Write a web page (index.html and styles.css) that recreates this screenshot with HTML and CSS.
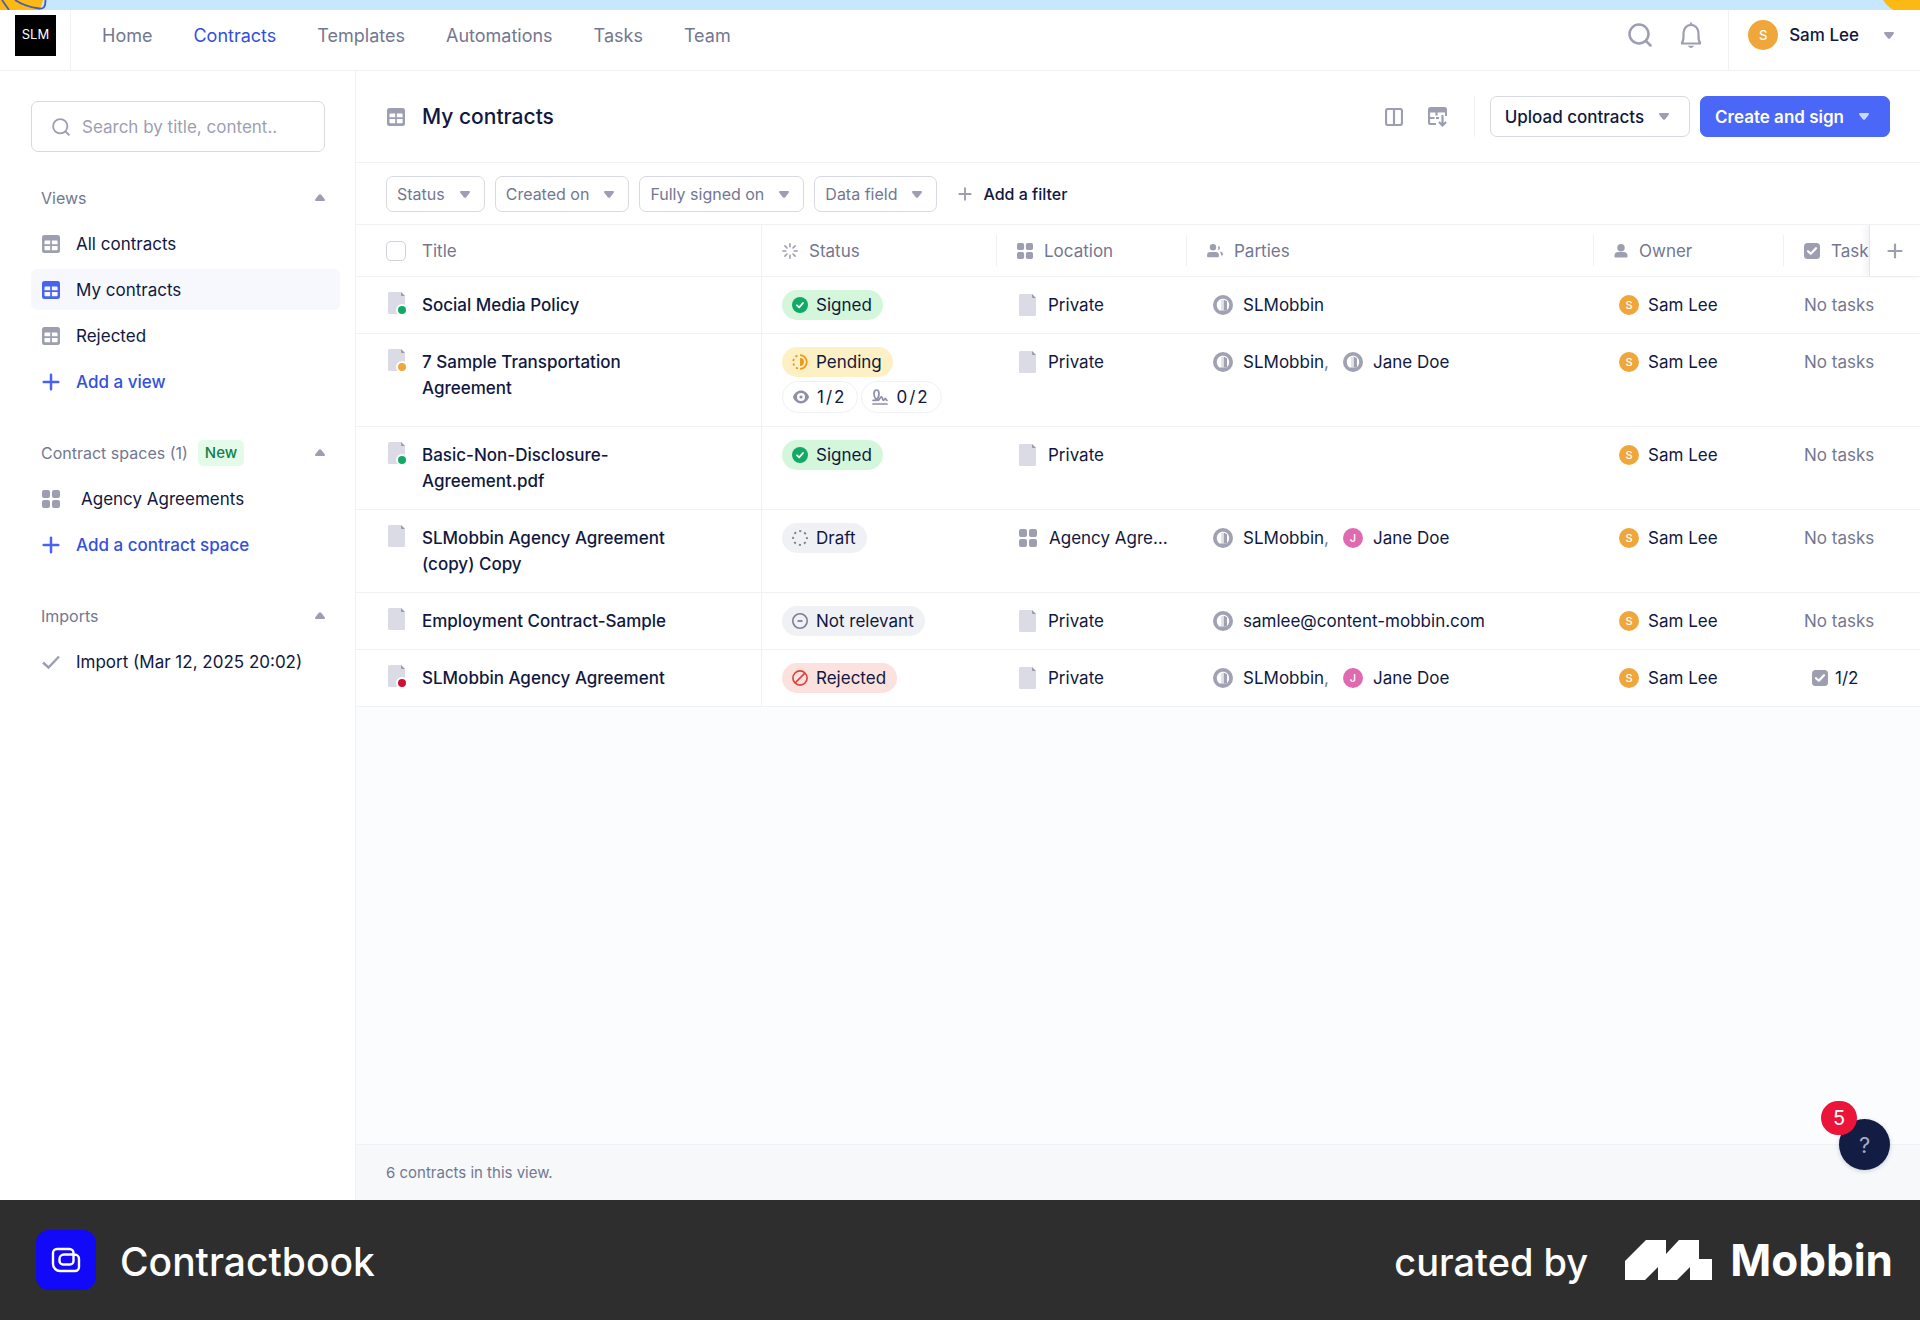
FILE: index.html
```html
<!DOCTYPE html>
<html lang="en">
<head>
    <meta charset="UTF-8">
    <meta name="viewport" content="width=device-width, initial-scale=1.0">
    <title>My contracts - Contractbook</title>
    <link rel="stylesheet" href="styles.css">
</head>
<body>

    <!-- Shared icons -->
    <svg class="sprite" aria-hidden="true">
        <symbol id="i-caret" viewBox="0 0 10 7"><path d="M1.2 0h7.600c1 0 1.500 1 .9 1.800L6 6.400c-.5.6-1.500.6-2 0L.3 1.800C-.3 1 .2 0 1.200 0z" fill="currentColor"/></symbol>
        <symbol id="i-up" viewBox="0 0 10 7"><path d="M1.200 7h7.600c1 0 1.500-1 .9-1.800L6.200.8c-.6-.8-1.800-.8-2.400 0L.3 5.200C-.3 6 .2 7 1.200 7z" fill="currentColor"/></symbol>
        <symbol id="i-table" viewBox="0 0 18 18"><path fill-rule="evenodd" d="M2.500 0h13A2.500 2.500 0 0 1 18 2.500v13a2.500 2.500 0 0 1-2.500 2.500h-13A2.500 2.500 0 0 1 0 15.500v-13A2.500 2.500 0 0 1 2.500 0zM3.500 5.500a1 1 0 0 0-1 1v2.700h5.700V5.500zM9.900 5.500v3.700h5.700V6.500a1 1 0 0 0-1-1zM2.500 11v3.200a1 1 0 0 0 1 1h4.700V11zM9.900 11v4.200h4.700a1 1 0 0 0 1-1V11z" fill="currentColor"/></symbol>
        <symbol id="i-grid" viewBox="0 0 18 18"><g fill="currentColor"><rect width="8" height="8" rx="2"/><rect x="10" width="8" height="8" rx="2"/><rect y="10" width="8" height="8" rx="2"/><rect x="10" y="10" width="8" height="8" rx="2"/></g></symbol>
        <symbol id="i-plus" viewBox="0 0 16 16"><path d="M8 1.500v13M1.500 8h13" stroke="currentColor" stroke-width="2.200" stroke-linecap="round"/></symbol>
        <symbol id="i-search" viewBox="0 0 24 24"><g fill="none" stroke="currentColor" stroke-width="2.500" stroke-linecap="round"><circle cx="11" cy="11" r="9.500"/><path d="M18 18l4.500 4.500"/></g></symbol>
        <symbol id="i-doc" viewBox="0 0 17 22"><path d="M1.500 0H13l4 4v16.500a1.500 1.500 0 0 1-1.500 1.500h-14A1.500 1.500 0 0 1 0 20.500v-19A1.500 1.500 0 0 1 1.500 0z" fill="#dadbe4"/><path d="M13 0l4 4h-3.200a.8.8 0 0 1-.8-.8z" fill="#9a9cae"/></symbol>
        <symbol id="i-org" viewBox="0 0 20 20"><circle cx="10" cy="10" r="10" fill="#a0a2b3"/><path d="M10 3.800c3.500 0 6.200 2.700 6.200 6.200 0 2.600-1.200 4.500-2.700 5.500H6.500C5 14.500 3.800 12.600 3.800 10c0-3.500 2.700-6.200 6.200-6.200z" fill="#fff"/><path d="M10.600 4.500l3.400 1.800v9.200h-3.400z" fill="#a0a2b3"/><path d="M9 5v10.500" stroke="#a0a2b3" stroke-width=".6"/></symbol>
        <symbol id="i-check" viewBox="0 0 16 16"><rect width="16" height="16" rx="3.500" fill="#9d9fb1"/><path d="M4 8.200l2.800 2.600L12 5.200" fill="none" stroke="#fff" stroke-width="2.200" stroke-linecap="round" stroke-linejoin="round"/></symbol>
        <symbol id="i-signed" viewBox="0 0 16 16"><circle cx="8" cy="8" r="8" fill="#12a966"/><path d="M5 8.300l2.200 2L11 6" fill="none" stroke="#fff" stroke-width="1.800" stroke-linecap="round" stroke-linejoin="round"/></symbol>
        <symbol id="i-pending" viewBox="0 0 16 16"><path d="M8 1.200a6.800 6.800 0 0 1 0 13.600" fill="none" stroke="#ee9a1d" stroke-width="1.800"/><path d="M8 4a4 4 0 0 1 0 8z" fill="#ee9a1d"/><path d="M8 14.800A6.800 6.800 0 0 1 8 1.200" fill="none" stroke="#ee9a1d" stroke-width="1.800" stroke-dasharray="2.200 2.600" stroke-dashoffset="-2"/></symbol>
        <symbol id="i-draft" viewBox="0 0 16 16"><circle cx="8" cy="8" r="6.900" fill="none" stroke="#7c7f95" stroke-width="1.900" stroke-dasharray="2.200 3.220" stroke-dashoffset="1.100"/></symbol>
        <symbol id="i-minus" viewBox="0 0 16 16"><circle cx="8" cy="8" r="7.200" fill="none" stroke="#7c7f95" stroke-width="1.600"/><path d="M5.500 8h5" stroke="#7c7f95" stroke-width="1.800"/></symbol>
        <symbol id="i-reject" viewBox="0 0 16 16"><g fill="none" stroke="#d8463f" stroke-width="1.700"><circle cx="8" cy="8" r="7.100"/><path d="M3.200 12.800l9.600-9.600"/></g></symbol>
        <symbol id="i-eye" viewBox="0 0 16 16"><path fill-rule="evenodd" d="M8 1.500c3.600 0 6.300 2.500 7.800 5.700.2.500.2 1.100 0 1.600C14.300 12 11.600 14.500 8 14.500S1.700 12 .2 8.800a2 2 0 0 1 0-1.600C1.700 4 4.400 1.500 8 1.500zM8 4a4 4 0 1 0 0 8 4 4 0 0 0 0-8z" fill="#8e90a6"/><circle cx="8" cy="8" r="1.600" fill="#8e90a6"/></symbol>
        <symbol id="i-sign" viewBox="0 0 16 16"><g fill="none" stroke="#8e90a6" stroke-width="1.700" stroke-linecap="round"><path d="M1 15h14"/><path d="M1 11.300h3c2-1.500 3-4.300 3-6.800C7 2.300 6.200 1 4.500 1S2 2.300 2 4.500c0 2.800 1.500 6.800 4 6.800 1.500 0 2-3.500 3.500-3.500 1.200 0 .5 3.500 2 3.500 1 0 .8-2 1.800-2 .8 0 .5 2 1.700 2"/></g></symbol>
        <symbol id="i-user" viewBox="0 0 14 15"><g fill="currentColor"><circle cx="7" cy="4" r="4"/><path d="M0 12.500C0 10 1.500 8.500 4 8.500h6c2.500 0 4 1.500 4 4 0 1.500-.5 2-1.500 2h-11C.5 14.500 0 14 0 12.500z"/></g></symbol>
        <symbol id="i-users" viewBox="0 0 16 14"><g fill="currentColor"><circle cx="6" cy="3.200" r="3.200"/><path d="M0 11.500C0 9 1.200 8 3.500 8h5c2.300 0 3.500 1 3.500 3.500 0 1.300-.5 1.800-1.500 1.800h-9C.5 13.300 0 12.800 0 11.500z"/><path d="M11 2a2 2 0 0 1 0 4 5 5 0 0 0 0-4zM12.500 7.500c2.200 0 3.500 1 3.500 3 0 .8-.6 1-2 1 0-1.800-.4-3-1.500-4z"/></g></symbol>
        <symbol id="i-spin" viewBox="0 0 16 16"><path d="M8 .8v3M8 12.200v3M.8 8h3M12.200 8h3M2.900 2.900l2.100 2.100M11 11l2.100 2.100M2.900 13.100L5 11M11 5l2.100-2.100" stroke="currentColor" stroke-width="1.600" stroke-linecap="round"/></symbol>
    </svg>

    <!-- Bottom edge of the banner -->
    <div class="banner">
        <svg class="banner-left" viewBox="0 0 50 10"><path d="M0 0h43l-3 10H0z" fill="#fdb913"/><path d="M2 0l7 10M15 0c6 4 14 7 24 8.500 5 .7 6.500-2 6.500-8.500" fill="none" stroke="#4d5bb5" stroke-width="1.800"/></svg>
        <svg class="banner-right" viewBox="0 0 37 10"><path d="M0 0h37v10H11C6 8 3 4 0 0z" fill="#fdb913"/></svg>
    </div>

    <header class="topbar">
        <a class="workspace" href="#" aria-label="SLM workspace"><span class="workspace-logo">SLM</span></a>
        <nav class="main-nav">
            <a href="#">Home</a>
            <a href="#" class="active">Contracts</a>
            <a href="#">Templates</a>
            <a href="#">Automations</a>
            <a href="#">Tasks</a>
            <a href="#">Team</a>
        </nav>
        <div class="topbar-icons">
            <button class="icon-button" aria-label="Search"><svg class="icon-24"><use href="#i-search"/></svg></button>
            <button class="icon-button" aria-label="Notifications">
                <svg class="icon-26" viewBox="0 0 26 26" fill="none" stroke="currentColor" stroke-width="2.200"><path d="M13 2.500V.5M3 21.500h20M3.500 21.500c1.800-2 2-4 2-7v-3.500a7.500 8.200 0 0 1 15 0v3.500c0 3 .2 5 2 7" stroke-linejoin="round"/><path d="M10 23.800h6c-.6 1.300-1.700 2.200-3 2.200s-2.400-.9-3-2.200z" fill="currentColor" stroke="none"/></svg>
            </button>
        </div>
        <button class="account">
            <span class="avatar avatar-large">S</span>
            <span class="account-name">Sam Lee</span>
            <svg class="caret"><use href="#i-caret"/></svg>
        </button>
    </header>

    <div class="app">
        <aside class="sidebar">
            <label class="search">
                <svg class="icon-18"><use href="#i-search"/></svg>
                <input type="text" placeholder="Search by title, content.." aria-label="Search contracts">
            </label>

            <section class="side-group">
                <button class="side-heading">Views <svg class="caret"><use href="#i-up"/></svg></button>
                <a class="side-item" href="#"><svg class="icon-18"><use href="#i-table"/></svg>All contracts</a>
                <a class="side-item selected" href="#"><svg class="icon-18"><use href="#i-table"/></svg>My contracts</a>
                <a class="side-item" href="#"><svg class="icon-18"><use href="#i-table"/></svg>Rejected</a>
                <a class="side-item add" href="#"><svg class="icon-18"><use href="#i-plus"/></svg>Add a view</a>
            </section>

            <section class="side-group">
                <button class="side-heading">Contract spaces (1) <span class="new-tag">New</span> <svg class="caret"><use href="#i-up"/></svg></button>
                <a class="side-item space" href="#"><svg class="icon-18"><use href="#i-grid"/></svg>Agency Agreements</a>
                <a class="side-item add" href="#"><svg class="icon-18"><use href="#i-plus"/></svg>Add a contract space</a>
            </section>

            <section class="side-group">
                <button class="side-heading">Imports <svg class="caret"><use href="#i-up"/></svg></button>
                <a class="side-item" href="#"><svg class="icon-18" viewBox="0 0 18 18"><path d="M1 9.500L6.500 14.500 17 3.500" fill="none" stroke="currentColor" stroke-width="2.400"/></svg>Import (Mar 12, 2025 20:02)</a>
            </section>
        </aside>

        <main class="main">
            <div class="page-head">
                <svg class="icon-18"><use href="#i-table"/></svg>
                <h1>My contracts</h1>
                <div class="view-tools">
                    <button class="icon-button" aria-label="Columns"><svg class="icon-18" viewBox="0 0 18 18" fill="none" stroke="currentColor" stroke-width="2.200"><rect x="1" y="1" width="16" height="16" rx="2"/><path d="M9 1v16"/></svg></button>
                    <button class="icon-button" aria-label="Export table"><svg class="icon-20" viewBox="0 0 20 20"><path d="M2.500 0h14A2.500 2.500 0 0 1 19 2.500V5.500H0v-3A2.500 2.500 0 0 1 2.500 0z" fill="currentColor"/><path d="M1 5v10.500A1.500 1.500 0 0 0 2.500 17H8M1 11h5.500M8.500 5v3.500M14.500 8v10M11 15l3.500 3.500L18 15" fill="none" stroke="currentColor" stroke-width="2.200"/><path d="M8 11h3M18 5v4" stroke="currentColor" stroke-width="2"/></svg></button>
                </div>
                <div class="page-actions">
                    <button class="button">Upload contracts <svg class="caret"><use href="#i-caret"/></svg></button>
                    <button class="button primary">Create and sign <svg class="caret"><use href="#i-caret"/></svg></button>
                </div>
            </div>

            <div class="filters">
                <button class="chip">Status <svg class="caret"><use href="#i-caret"/></svg></button>
                <button class="chip">Created on <svg class="caret"><use href="#i-caret"/></svg></button>
                <button class="chip">Fully signed on <svg class="caret"><use href="#i-caret"/></svg></button>
                <button class="chip">Data field <svg class="caret"><use href="#i-caret"/></svg></button>
                <button class="add-filter"><svg class="icon-14"><use href="#i-plus"/></svg>Add a filter</button>
            </div>

            <div class="table-wrap">
                <table class="contracts">
                    <colgroup>
                        <col class="col-title"><col class="col-status"><col class="col-location"><col><col class="col-owner"><col class="col-tasks">
                    </colgroup>
                    <thead>
                        <tr>
                            <th class="first"><div class="head"><input type="checkbox" class="tick" aria-label="Select all contracts">Title</div></th>
                            <th><div class="head"><svg class="icon-16"><use href="#i-spin"/></svg>Status</div></th>
                            <th><div class="head split"><svg class="icon-16"><use href="#i-grid"/></svg>Location</div></th>
                            <th><div class="head split"><svg class="icon-16"><use href="#i-users"/></svg>Parties</div></th>
                            <th><div class="head split"><svg class="icon-14"><use href="#i-user"/></svg>Owner</div></th>
                            <th><div class="head split"><svg class="icon-16"><use href="#i-check"/></svg>Tasks</div></th>
                        </tr>
                    </thead>
                    <tbody>
                        <tr>
                            <td class="first"><a class="title" href="#"><span class="doc"><svg><use href="#i-doc"/></svg><i class="dot green"></i></span><span>Social Media Policy</span></a></td>
                            <td class="status"><span class="pill green"><svg class="icon-16"><use href="#i-signed"/></svg>Signed</span></td>
                            <td class="location"><div class="cell"><svg class="doc-icon"><use href="#i-doc"/></svg><span>Private</span></div></td>
                            <td class="parties"><div class="cell"><svg class="icon-20"><use href="#i-org"/></svg><span>SLMobbin</span></div></td>
                            <td class="owner"><div class="cell"><span class="avatar">S</span><span>Sam Lee</span></div></td>
                            <td class="tasks">No tasks</td>
                        </tr>
                        <tr>
                            <td class="first"><a class="title" href="#"><span class="doc"><svg><use href="#i-doc"/></svg><i class="dot orange"></i></span><span>7 Sample Transportation Agreement</span></a></td>
                            <td class="status">
                                <span class="pill yellow"><svg class="icon-16"><use href="#i-pending"/></svg>Pending</span>
                                <div class="progress">
                                    <span class="count"><svg class="icon-16"><use href="#i-eye"/></svg><span>1</span><span>/</span><span>2</span></span>
                                    <span class="count"><svg class="icon-16"><use href="#i-sign"/></svg><span>0</span><span>/</span><span>2</span></span>
                                </div>
                            </td>
                            <td class="location"><div class="cell"><svg class="doc-icon"><use href="#i-doc"/></svg><span>Private</span></div></td>
                            <td class="parties"><div class="cell"><svg class="icon-20"><use href="#i-org"/></svg><span>SLMobbin<span class="comma">,</span></span><svg class="icon-20"><use href="#i-org"/></svg><span>Jane Doe</span></div></td>
                            <td class="owner"><div class="cell"><span class="avatar">S</span><span>Sam Lee</span></div></td>
                            <td class="tasks">No tasks</td>
                        </tr>
                        <tr>
                            <td class="first"><a class="title" href="#"><span class="doc"><svg><use href="#i-doc"/></svg><i class="dot green"></i></span><span>Basic-Non-Disclosure-Agreement.pdf</span></a></td>
                            <td class="status"><span class="pill green"><svg class="icon-16"><use href="#i-signed"/></svg>Signed</span></td>
                            <td class="location"><div class="cell"><svg class="doc-icon"><use href="#i-doc"/></svg><span>Private</span></div></td>
                            <td class="parties"></td>
                            <td class="owner"><div class="cell"><span class="avatar">S</span><span>Sam Lee</span></div></td>
                            <td class="tasks">No tasks</td>
                        </tr>
                        <tr>
                            <td class="first"><a class="title" href="#"><span class="doc"><svg><use href="#i-doc"/></svg></span><span>SLMobbin Agency Agreement (copy) Copy</span></a></td>
                            <td class="status"><span class="pill"><svg class="icon-16"><use href="#i-draft"/></svg>Draft</span></td>
                            <td class="location"><div class="cell"><svg class="icon-18"><use href="#i-grid"/></svg><span class="clip">Agency Agreements</span></div></td>
                            <td class="parties"><div class="cell"><svg class="icon-20"><use href="#i-org"/></svg><span>SLMobbin<span class="comma">,</span></span><span class="avatar pink">J</span><span>Jane Doe</span></div></td>
                            <td class="owner"><div class="cell"><span class="avatar">S</span><span>Sam Lee</span></div></td>
                            <td class="tasks">No tasks</td>
                        </tr>
                        <tr>
                            <td class="first"><a class="title" href="#"><span class="doc"><svg><use href="#i-doc"/></svg></span><span>Employment Contract-Sample</span></a></td>
                            <td class="status"><span class="pill"><svg class="icon-16"><use href="#i-minus"/></svg>Not relevant</span></td>
                            <td class="location"><div class="cell"><svg class="doc-icon"><use href="#i-doc"/></svg><span>Private</span></div></td>
                            <td class="parties"><div class="cell"><svg class="icon-20"><use href="#i-org"/></svg><span>samlee@content-mobbin.com</span></div></td>
                            <td class="owner"><div class="cell"><span class="avatar">S</span><span>Sam Lee</span></div></td>
                            <td class="tasks">No tasks</td>
                        </tr>
                        <tr>
                            <td class="first"><a class="title" href="#"><span class="doc"><svg><use href="#i-doc"/></svg><i class="dot red"></i></span><span>SLMobbin Agency Agreement</span></a></td>
                            <td class="status"><span class="pill red"><svg class="icon-16"><use href="#i-reject"/></svg>Rejected</span></td>
                            <td class="location"><div class="cell"><svg class="doc-icon"><use href="#i-doc"/></svg><span>Private</span></div></td>
                            <td class="parties"><div class="cell"><svg class="icon-20"><use href="#i-org"/></svg><span>SLMobbin<span class="comma">,</span></span><span class="avatar pink">J</span><span>Jane Doe</span></div></td>
                            <td class="owner"><div class="cell"><span class="avatar">S</span><span>Sam Lee</span></div></td>
                            <td class="tasks"><div class="cell task-count"><svg class="icon-16"><use href="#i-check"/></svg><span>1/2</span></div></td>
                        </tr>
                    </tbody>
                </table>
                <button class="add-column" aria-label="Add column"><svg class="icon-16"><use href="#i-plus"/></svg></button>
            </div>

            <div class="table-footer">6 contracts in this view.</div>

            <div class="help">
                <button class="help-button" aria-label="Help">?</button>
                <span class="help-badge">5</span>
            </div>
        </main>
    </div>

    <footer class="credit">
        <svg class="credit-icon" viewBox="0 0 60 60"><rect width="60" height="60" rx="13" fill="#1109f7"/><g fill="none" stroke="#fff" stroke-width="2.400"><path d="M37.500 24.500V23a4 4 0 0 0-4-4H21a4 4 0 0 0-4 4v11a7 7 0 0 0 7 7h15a4 4 0 0 0 4-4v-8a4.500 4.500 0 0 0-4.500-4.500H28a4.500 4.500 0 0 0-4.500 4.500v2a3.500 3.500 0 0 0 3.500 3.500h7a3.500 3.500 0 0 0 3.500-3.500z"/></g></svg>
        <span class="credit-name">Contractbook</span>
        <span class="credit-by">curated by</span>
        <svg class="mobbin-mark" viewBox="0 0 87 40"><path d="M0 21L21 0h20v14L54 0h20v19h13v21H65V27L52 40H33V27L20 40H0z" fill="#fff"/></svg>
        <span class="mobbin-name">Mobbin</span>
    </footer>

</body>
</html>
```
FILE: styles.css
```css
* {
    box-sizing: border-box;
}
body {
    margin: 0;
    min-height: 100vh;
    display: flex;
    flex-direction: column;
    font-family: Inter, "Liberation Sans", Arial, sans-serif;
    font-size: 17px;
    line-height: 26px;
    color: #101840;
    background: #fff;
}
a {
    color: inherit;
    text-decoration: none;
}
button {
    font: inherit;
    color: inherit;
    background: none;
    border: 0;
    padding: 0;
    cursor: pointer;
}
svg {
    display: block;
    flex: none;
}
.sprite {
    position: absolute;
    width: 0;
    height: 0;
}
.icon-14 { width: 14px; height: 14px; }
.icon-16 { width: 16px; height: 16px; }
.icon-18 { width: 18px; height: 18px; }
.icon-20 { width: 20px; height: 20px; }
.icon-24 { width: 24px; height: 24px; }
.icon-26 { width: 26px; height: 26px; }
.caret {
    width: 10px;
    height: 7px;
    color: #9d9fb1;
}
.icon-button {
    color: #9d9fb1;
}

/* Banner and top bar */
.banner {
    display: flex;
    justify-content: space-between;
    height: 10px;
    background: #c6e7fd;
}
.banner-left {
    width: 50px;
    height: 10px;
}
.banner-right {
    width: 37px;
    height: 10px;
}
.topbar {
    display: flex;
    height: 61px;
    border-bottom: 1px solid #f0f1f5;
}
.workspace {
    padding: 5px 14px 0 15px;
    border-right: 1px solid #f0f1f5;
}
.workspace-logo {
    display: block;
    width: 41px;
    height: 41px;
    background: #000;
    color: #fff;
    font-size: 13px;
    line-height: 38px;
    text-align: center;
}
.main-nav {
    flex: 1;
    display: flex;
    gap: 41px;
    padding: 13px 0 0 31px;
    font-size: 18px;
    color: #737791;
}
.main-nav .active {
    color: #3350dc;
}
.topbar-icons {
    display: flex;
    align-items: center;
    gap: 26px;
    padding: 0 24px 10px 0;
}
.account {
    display: flex;
    align-items: center;
    gap: 11px;
    padding: 0 26px 10px 19px;
    border-left: 1px solid #f0f1f5;
    font-weight: 500;
}
.account .caret {
    margin-left: 14px;
}
.avatar {
    width: 20px;
    height: 20px;
    flex: none;
    border-radius: 50%;
    background: #efa63b;
    color: #fff;
    font-size: 11px;
    font-weight: 500;
    line-height: 20px;
    text-align: center;
}
.avatar.pink {
    background: #e06ab0;
}
.avatar-large {
    width: 30px;
    height: 30px;
    font-size: 13px;
    line-height: 30px;
}

/* Sidebar */
.app {
    flex: 1;
    display: flex;
}
.sidebar {
    flex: none;
    width: 356px;
    padding: 30px 15px 0 31px;
    border-right: 1px solid #f0f1f5;
}
.search {
    display: flex;
    align-items: center;
    gap: 12px;
    height: 51px;
    margin-right: 15px;
    padding: 0 20px;
    border: 1px solid #d8d9e2;
    border-radius: 7px;
    color: #9d9fb1;
}
.search input {
    flex: 1;
    min-width: 0;
    border: 0;
    padding: 0;
    outline: 0;
    font: inherit;
    color: #101840;
}
.search input::placeholder {
    color: #9d9fb1;
}
.side-group {
    display: flex;
    flex-direction: column;
    gap: 5px;
    margin-top: 25px;
}
.side-group + .side-group {
    margin-top: 30px;
}
.side-heading {
    display: flex;
    align-items: center;
    gap: 10px;
    height: 41px;
    padding: 0 15px 0 10px;
    font-size: 16px;
    color: #737791;
}
.side-heading .caret {
    margin-left: auto;
}
.side-item {
    display: flex;
    align-items: center;
    gap: 16px;
    height: 41px;
    padding: 0 11px;
    border-radius: 6px;
}
.side-item svg {
    color: #9d9fb1;
}
.side-item.selected {
    background: #f6f8fe;
}
.side-item.selected svg, .side-item.add svg {
    color: #4763f0;
}
.side-item.space {
    gap: 21px;
}
.side-item.add {
    color: #3350dc;
    font-weight: 500;
}
.new-tag {
    padding: 0 7px;
    border-radius: 5px;
    background: #e4fbea;
    color: #12804a;
    font-size: 15px;
    font-weight: 500;
}

/* Main area */
.main {
    flex: 1;
    min-width: 0;
    display: flex;
    flex-direction: column;
    position: relative;
    background: #fbfcfe;
}
.page-head {
    display: flex;
    align-items: center;
    height: 92px;
    padding: 0 30px 0 31px;
    background: #fff;
    border-bottom: 1px solid #f0f1f5;
    color: #9d9fb1;
}
.page-head h1 {
    flex: 1;
    margin: 0 0 0 17px;
    font-size: 21px;
    font-weight: 500;
    color: #101840;
}
.view-tools {
    display: flex;
    align-items: center;
    gap: 25px;
    height: 41px;
    padding-right: 26px;
    border-right: 1px solid #f0f1f5;
}
.page-actions {
    display: flex;
    gap: 10px;
    margin-left: 15px;
}
.button {
    display: flex;
    align-items: center;
    gap: 15px;
    height: 41px;
    padding: 0 20px 0 14px;
    border: 1px solid #d8d9e2;
    border-radius: 7px;
    color: #101840;
    font-weight: 500;
}
.button.primary {
    border-color: #4a67f7;
    background: #4a67f7;
    color: #fff;
    font-weight: 600;
}
.button.primary .caret {
    color: #c8d7ff;
}
.filters {
    display: flex;
    align-items: center;
    gap: 10px;
    padding: 13px 30px 12px;
    background: #fff;
    border-bottom: 1px solid #f0f1f5;
    font-size: 16px;
}
.chip {
    display: flex;
    align-items: center;
    gap: 15px;
    height: 36px;
    padding: 0 14px 0 10px;
    border: 1px solid #d8d9e2;
    border-radius: 7px;
    color: #737791;
}
.add-filter {
    display: flex;
    align-items: center;
    gap: 11px;
    margin-left: 11px;
    font-weight: 500;
}
.add-filter svg {
    color: #9d9fb1;
}

/* Contracts table */
.table-wrap {
    position: relative;
    overflow: hidden;
    flex: 1;
}
.contracts {
    width: 100%;
    table-layout: fixed;
    border-collapse: separate;
    border-spacing: 0;
    background: #fff;
}
.col-title { width: 406px; }
.col-status { width: 234px; }
.col-location { width: 190px; }
.col-owner { width: 190px; }
.col-tasks { width: 137px; }
.contracts th, .contracts td {
    border-bottom: 1px solid #f0f1f5;
    text-align: left;
    vertical-align: top;
}
.contracts th {
    padding: 10px 0;
    font-weight: 400;
    color: #737791;
}
.contracts td {
    padding: 15px 0 15px 21px;
    white-space: nowrap;
}
.contracts .first {
    padding-left: 30px;
    border-right: 1px solid #f0f1f5;
    white-space: normal;
}
.head {
    display: flex;
    align-items: center;
    gap: 11px;
    height: 31px;
    padding-left: 20px;
}
.head svg {
    color: #9d9fb1;
}
.head.split {
    border-left: 1px solid #f0f1f5;
}
.first .head {
    gap: 16px;
    padding-left: 0;
}
.tick {
    appearance: none;
    width: 20px;
    height: 20px;
    margin: 0;
    border: 1px solid #cfd0e0;
    border-radius: 5px;
}
.title {
    display: flex;
    gap: 17px;
    padding-right: 70px;
    font-weight: 500;
}
.doc {
    position: relative;
    flex: none;
    width: 19px;
    height: 22px;
    padding-left: 2px;
}
.doc svg, .doc-icon {
    width: 17px;
    height: 22px;
}
.dot {
    position: absolute;
    right: -3px;
    bottom: -2px;
    width: 12px;
    height: 12px;
    border: 2px solid #fff;
    border-radius: 50%;
}
.dot.green { background: #12a966; }
.dot.orange { background: #efa63b; }
.dot.red { background: #d01030; }
.contracts .status {
    padding: 13px 0 13px 20px;
}
.pill {
    display: flex;
    align-items: center;
    gap: 8px;
    width: fit-content;
    height: 30px;
    padding: 0 11px 0 10px;
    border-radius: 15px;
    background: #f0f1f5;
}
.pill.green { background: #d4f7dc; }
.pill.yellow { background: #fcf0c4; }
.pill.red { background: #fbe2df; }
.progress {
    display: flex;
    gap: 3px;
    margin-top: 4px;
}
.count {
    display: flex;
    align-items: center;
    gap: 2px;
    height: 32px;
    padding: 0 13px 0 10px;
    border: 1px solid #f0f1f5;
    border-radius: 16px;
}
.count svg {
    margin-right: 6px;
}
.cell {
    display: flex;
    align-items: center;
    height: 26px;
    gap: 9px;
}
.location .cell {
    gap: 12px;
    padding: 0 12px 0 2px;
}
.location svg {
    color: #9d9fb1;
}
.clip {
    overflow: hidden;
    text-overflow: ellipsis;
}
.parties .cell {
    gap: 10px;
    padding-left: 6px;
}
.comma {
    color: #737791;
    margin-right: 4px;
}
.owner .cell {
    padding-left: 5px;
}
.contracts .tasks {
    color: #737791;
}
.task-count {
    padding-left: 8px;
    gap: 7px;
    color: #101840;
}
.add-column {
    position: absolute;
    top: 0;
    right: 0;
    display: flex;
    align-items: center;
    justify-content: center;
    width: 51px;
    height: 51px;
    background: #fff;
    border-left: 1px solid #e4e5ec;
    box-shadow: -4px 0 6px rgba(16,24,64,0.05);
    color: #9d9fb1;
}
.table-footer {
    padding: 15px 30px 14px;
    border-top: 1px solid #f0f1f5;
    background: #f6f8fa;
    font-size: 15px;
    color: #737791;
}

/* Help bubble over the table */
.help {
    position: absolute;
    right: 30px;
    bottom: 30px;
}
.help-button {
    display: block;
    width: 51px;
    height: 51px;
    border-radius: 50%;
    background: #131c42;
    color: #a8abbd;
    font-size: 22px;
    box-shadow: 0 1px 4px rgba(16,24,64,0.2);
}
.help-badge {
    position: absolute;
    top: -18px;
    left: -18px;
    width: 36px;
    height: 34px;
    border-radius: 17px;
    background: #eb1539;
    color: #fff;
    font-size: 20px;
    line-height: 34px;
    text-align: center;
}

/* Credit bar */
.credit {
    display: flex;
    align-items: center;
    height: 120px;
    padding: 0 27px 0 36px;
    background: #2e2e2e;
    color: #fff;
    font-size: 39px;
    font-weight: 500;
    line-height: 60px;
}
.credit-icon {
    width: 60px;
    height: 60px;
}
.credit-name {
    flex: 1;
    margin-left: 24px;
    padding-top: 4px;
}
.credit-by {
    padding-top: 4px;
    font-size: 38px;
}
.mobbin-mark {
    width: 87px;
    height: 40px;
    margin: 0 18px 0 37px;
}
.mobbin-name {
    font-size: 44px;
    font-weight: 700;
}
```
